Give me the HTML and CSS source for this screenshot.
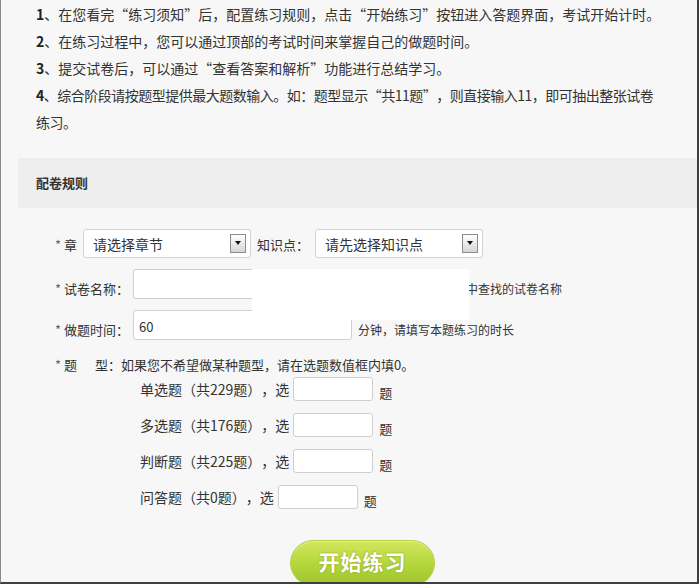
FILE: index.html
```html
<!DOCTYPE html>
<html lang="zh-CN">
<head>
  <meta charset="UTF-8">
  <title>配卷规则</title>
  <link rel="stylesheet" href="styles.css">
</head>
<body>
  <div class="notes">
    <p><b>1</b>、在您看完“练习须知”后，配置练习规则，点击“开始练习”按钮进入答题界面，考试开始计时。</p>
    <p><b>2</b>、在练习过程中，您可以通过顶部的考试时间来掌握自己的做题时间。</p>
    <p><b>3</b>、提交试卷后，可以通过“查看答案和解析”功能进行总结学习。</p>
    <p class="tight"><b>4</b>、综合阶段请按题型提供最大题数输入。如：题型显示“共11题”，则直接输入11，即可抽出整张试卷<br>练习。</p>
  </div>

  <div class="section">
    <div class="section-title">配卷规则</div>

    <div class="form">
      <!-- 章节 / 知识点 -->
      <div class="row row-select">
        <span class="label"><i>*</i> 章</span>
        <div class="select">
          <span>请选择章节</span>
          <span class="arrow"></span>
        </div>
        <span class="label">知识点：</span>
        <div class="select">
          <span>请先选择知识点</span>
          <span class="arrow"></span>
        </div>
      </div>

      <div class="row">
        <span class="label"><i>*</i> 试卷名称：</span>
        <input class="text-input" type="text">
        <span class="hint hint-name">请输入便于在列表中查找的试卷名称</span>
      </div>

      <div class="row">
        <span class="label"><i>*</i> 做题时间：</span>
        <input class="text-input" type="text" value="60">
        <span class="hint">分钟，请填写本题练习的时长</span>
      </div>

      <div class="type-tip"><i>*</i> 题<span class="gap"></span>型：如果您不希望做某种题型，请在选题数值框内填0。</div>

      <div class="types">
        <div class="type-row">单选题（共229题），选<input class="num-input" type="text"><span>题</span></div>
        <div class="type-row">多选题（共176题），选<input class="num-input" type="text"><span>题</span></div>
        <div class="type-row">判断题（共225题），选<input class="num-input" type="text"><span>题</span></div>
        <div class="type-row">问答题（共0题），选<input class="num-input" type="text"><span>题</span></div>
      </div>

      <div class="actions">
        <button class="start-btn">开始练习</button>
      </div>
    </div>
  </div>

  <!-- 截图里被遮挡的一块 -->
  <div class="mask"></div>
</body>
</html>
```

FILE: styles.css
```css
html, body {
  margin: 0;
  padding: 0;
}
body {
  width: 699px;
  height: 584px;
  box-sizing: border-box;
  overflow: hidden;
  position: relative;
  background: #f7f7f7;
  border-left: 1px solid #8a8a8a;
  border-right: 2px solid #3f3f3f;
  border-bottom: 2px solid #3f3f3f;
  font-family: "Noto Sans CJK SC", "Noto Sans", sans-serif;
  color: #333;
  text-spacing-trim: space-all;
}
.notes {
  padding: 1px 0 0 35px;
}
.notes p {
  margin: 0;
  font-size: 14px;
  line-height: 27px;
  white-space: nowrap;
}
.notes p.tight {
  letter-spacing: -0.5px;
}
.notes b {
  color: #222;
}
.section {
  margin: 22px 0 0 17px;
}
.section-title {
  height: 50px;
  line-height: 50px;
  padding-left: 18px;
  background: #eeeeee;
  font-size: 13px;
  font-weight: bold;
  color: #333;
}
.form {
  padding-left: 37px;
  font-size: 13px;
}
.label i, .type-tip i {
  font-style: normal;
  color: #666;
}
.row {
  display: flex;
  align-items: center;
  gap: 4px;
  margin-top: 11px;
}
.row-select {
  margin-top: 21px;
  gap: 6px;
}
.row .label {
  padding-top: 8px;
  white-space: nowrap;
}
.row-select .label {
  padding-top: 2px;
}
.select {
  width: 168px;
  height: 29px;
  box-sizing: border-box;
  background: #fff;
  border: 1px solid #d2d2d2;
  border-radius: 3px;
  display: flex;
  align-items: center;
  justify-content: space-between;
  padding: 0 4px 0 9px;
  font-size: 14px;
  color: #333;
}
.select .arrow {
  width: 16px;
  height: 19px;
  box-sizing: border-box;
  border: 1px solid #8c8c8c;
  background: linear-gradient(#ffffff, #d6d6d6);
  position: relative;
}
.select .arrow::after {
  content: "";
  position: absolute;
  left: 4px;
  top: 6px;
  border-left: 3px solid transparent;
  border-right: 3px solid transparent;
  border-top: 4px solid #111;
}
.text-input {
  width: 219px;
  height: 30px;
  box-sizing: border-box;
  border: 1px solid #d0d0d0;
  border-radius: 3px;
  background: #fff;
  padding: 2px 5px 0;
  font-family: inherit;
  font-size: 13px;
  color: #333;
  outline: none;
}
.hint {
  font-size: 12px;
  padding-top: 9px;
  margin-left: 2px;
  white-space: nowrap;
}
.hint-name {
  margin-left: 14px;
}
.type-tip {
  margin-top: 16px;
  line-height: 18px;
}
.type-tip .gap {
  display: inline-block;
  width: 18px;
}
.types {
  padding-left: 85px;
  margin-top: 3px;
}
.type-row {
  display: flex;
  align-items: center;
  height: 24px;
  margin-bottom: 12px;
  font-size: 14px;
  white-space: nowrap;
}
.num-input {
  width: 80px;
  height: 24px;
  box-sizing: border-box;
  margin-left: 4px;
  border: 1px solid #cfcfcf;
  border-radius: 3px;
  background: #fff;
  outline: none;
}
.type-row span {
  margin-left: 6px;
  padding-top: 6px;
  font-size: 13px;
}
.actions {
  padding-top: 19px;
  padding-left: 235px;
}
.start-btn {
  width: 145px;
  height: 46px;
  border: 1px solid #b6cf45;
  border-radius: 23px;
  background: linear-gradient(#d3e65e, #b3d63a 55%, #9dc52b);
  box-shadow: inset 0 1px 0 rgba(255, 255, 255, 0.35);
  color: #fff;
  font-family: inherit;
  font-size: 21px;
  font-weight: bold;
  letter-spacing: 1px;
  text-shadow: 0 0 2px rgba(90, 110, 20, 0.6);
  padding: 0 0 4px;
  cursor: pointer;
}
.mask {
  position: absolute;
  left: 251px;
  top: 269px;
  width: 217px;
  height: 51px;
  background: #fff;
}
```
